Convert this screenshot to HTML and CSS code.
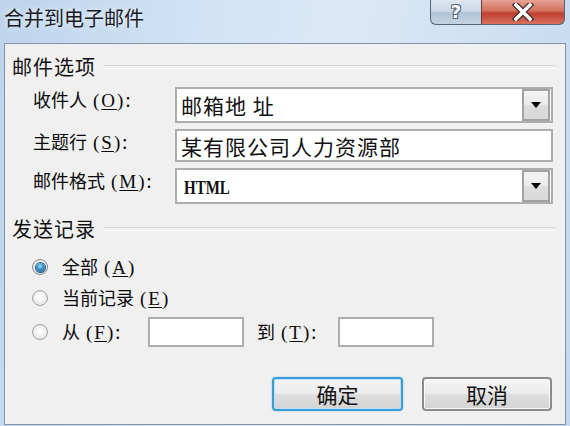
FILE: index.html
```html
<!DOCTYPE html>
<html lang="zh-CN">
<head>
<meta charset="utf-8">
<title>合并到电子邮件</title>
<link rel="stylesheet" href="styles.css">
</head>
<body>
<div class="window">
  <div class="titlebar">
    <div class="title">合并到电子邮件</div>
    <div class="caption-btns">
      <div class="cap-btn help"><span class="q">?</span></div>
      <div class="cap-btn close">
        <svg width="22" height="18" viewBox="0 0 22 18">
          <path d="M4 2 L18 16 M18 2 L4 16" stroke="#3a2a2a" stroke-width="6" stroke-linecap="square"/>
          <path d="M4 2 L18 16 M18 2 L4 16" stroke="#ffffff" stroke-width="3.6" stroke-linecap="square"/>
        </svg>
      </div>
    </div>
  </div>
  <div class="panel">
    <div class="group-head"><span class="legend">邮件选项</span></div>
    <div class="form">
      <div class="label">收件人<span class="acc">(<u>O</u>)</span>:</div>
      <div class="combo">
        <span class="value">邮箱地 址</span>
        <span class="drop"><svg width="10" height="6" viewBox="0 0 10 6"><path d="M0 0 H10 L5 6 Z" fill="#000"/></svg></span>
      </div>
      <div class="label">主题行<span class="acc">(<u>S</u>)</span>:</div>
      <div class="textbox"><span class="value">某有限公司人力资源部</span></div>
      <div class="label">邮件格式<span class="acc">(<u>M</u>)</span>:</div>
      <div class="combo">
        <span class="value"><span class="mono">HTML</span></span>
        <span class="drop"><svg width="10" height="6" viewBox="0 0 10 6"><path d="M0 0 H10 L5 6 Z" fill="#000"/></svg></span>
      </div>
    </div>
    <div class="group-head second"><span class="legend">发送记录</span></div>
    <div class="radios">
      <div class="radio-row">
        <span class="radio checked"><span class="dot"></span></span>
        <span class="rlabel">全部<span class="acc">(<u>A</u>)</span></span>
      </div>
      <div class="radio-row">
        <span class="radio"></span>
        <span class="rlabel">当前记录<span class="acc">(<u>E</u>)</span></span>
      </div>
      <div class="radio-row range">
        <span class="radio"></span>
        <span class="rlabel from">从<span class="acc">(<u>F</u>)</span>:</span>
        <span class="small-box"></span>
        <span class="rlabel to">到<span class="acc">(<u>T</u>)</span>:</span>
        <span class="small-box"></span>
      </div>
    </div>
    <div class="buttons">
      <div class="btn default">确定</div>
      <div class="btn">取消</div>
    </div>
  </div>
</div>
</body>
</html>
```
FILE: styles.css
```css
* { box-sizing: border-box; }

html, body {
  margin: 0;
  padding: 0;
}

body {
  width: 570px;
  height: 426px;
  overflow: hidden;
  background: linear-gradient(100deg, #bdd4ec 0%, #d3e4f6 35%, #dbe8f6 55%, #c3d8ee 100%);
  font-family: "Noto Sans CJK SC", "Noto Sans", sans-serif;
  color: #000;
}

.window {
  display: flex;
  flex-direction: column;
  height: 426px;
}

.titlebar {
  height: 43px;
  display: flex;
  align-items: flex-start;
  flex: none;
}

.title {
  font-size: 20px;
  line-height: 24px;
  padding: 6px 0 0 4px;
  color: #1b1b22;
  text-shadow: 0 0 6px rgba(255,255,255,0.9);
}

.caption-btns {
  margin-left: auto;
  margin-right: 5px;
  display: flex;
  height: 25px;
}

.cap-btn {
  height: 25px;
  display: flex;
  align-items: center;
  justify-content: center;
  border: 1px solid #55667a;
  border-top: none;
}

.help {
  width: 51px;
  border-radius: 0 0 0 6px;
  border-right: none;
  background: linear-gradient(#dfe7f0 0%, #c9d6e4 50%, #b1c3d6 52%, #c3d3e3 100%);
}

.q {
  font-family: "DejaVu Sans", sans-serif;
  font-weight: bold;
  font-size: 18px;
  line-height: 20px;
  color: #ffffff;
  text-shadow: 1px 1px 0 #556677, -1px -1px 0 #556677, 1px -1px 0 #556677, -1px 1px 0 #556677;
}

.close {
  width: 84px;
  border-radius: 0 0 6px 0;
  border-left: 1px solid #6a3a38;
  background: linear-gradient(#e5a293 0%, #d2705f 45%, #c0402f 55%, #d8705e 100%);
}

.panel {
  height: 382px;
  margin: 0 4px 0 4px;
  border: 1px solid #8394a8;
  background: #f0f0f0;
  display: flex;
  flex-direction: column;
}

.group-head {
  display: flex;
  align-items: center;
  height: 24px;
  margin-top: 11px;
  padding-left: 7px;
  padding-right: 9px;
}

.group-head.second {
  margin-top: 13px;
}

.legend {
  font-size: 20px;
  line-height: 24px;
  letter-spacing: 1px;
  color: #101010;
}

.group-head::after {
  content: "";
  flex: 1;
  height: 2px;
  margin-left: 8px;
  border-top: 1px solid #d6d8da;
  border-bottom: 1px solid #fbfbfb;
}

.form {
  margin-top: 8px;
  padding-left: 28px;
  display: grid;
  grid-template-columns: 142px 378px;
  row-gap: 6px;
}

.label {
  font-size: 18px;
  line-height: 20px;
  padding-top: 2px;
  color: #0a0a0a;
  white-space: nowrap;
}

.acc {
  font-family: "Liberation Serif", "DejaVu Serif", serif;
  font-size: 19px;
  letter-spacing: 2px;
  margin-left: 6px;
}

.acc u {
  text-underline-offset: 2px;
}

.combo, .textbox {
  background: #fff;
  border: 2px solid #adadad;
  display: flex;
  align-items: center;
  padding-left: 4px;
}

.combo {
  height: 36px;
  padding-right: 1px;
}

.textbox {
  height: 33px;
}

.value {
  font-size: 21px;
  line-height: 26px;
  letter-spacing: 1px;
  color: #111;
  flex: 1;
}

.mono {
  display: inline-block;
  font-family: "Liberation Serif", "DejaVu Serif", serif;
  font-weight: bold;
  font-size: 15px;
  letter-spacing: 0;
  margin-left: 3px;
  transform: scaleY(1.2);
}

.drop {
  width: 28px;
  height: 32px;
  align-self: flex-start;
  border: 2px solid #a2a2a2;
  background: linear-gradient(#f3f3f3 0%, #ebebeb 50%, #dedede 51%, #d8d8d8 100%);
  display: flex;
  align-items: center;
  justify-content: center;
}

.radios {
  margin-top: 14px;
  padding-left: 27px;
  display: flex;
  flex-direction: column;
  gap: 7px;
}

.radio-row {
  display: flex;
  align-items: center;
  height: 24px;
}

.radio-row.range {
  height: 30px;
}

.radio {
  width: 16px;
  height: 16px;
  border-radius: 50%;
  border: 1px solid #a3a3a3;
  background: radial-gradient(circle at 50% 40%, #ffffff 0%, #f2f2f2 45%, #d9d9d9 100%);
  box-shadow: inset 0 0 0 1px #e8e8e8;
  display: flex;
  align-items: center;
  justify-content: center;
  flex: none;
}

.radio.checked {
  border-color: #8a8a8a;
}

.dot {
  width: 9px;
  height: 9px;
  border-radius: 50%;
  background: radial-gradient(circle at 45% 35%, #9fd6f5 0%, #3a91c8 45%, #145a8c 100%);
  box-shadow: 0 0 0 1px #2e5f88;
}

.rlabel {
  margin-left: 14px;
  font-size: 18px;
  line-height: 22px;
  color: #0a0a0a;
  white-space: nowrap;
}

.rlabel.from {
  width: 86px;
}

.rlabel.to {
  margin-left: 13px;
  width: 81px;
}

.small-box {
  width: 96px;
  height: 30px;
  background: #fff;
  border: 2px solid #adadad;
}

.buttons {
  margin-top: 30px;
  display: flex;
  justify-content: flex-end;
  gap: 19px;
  padding-right: 13px;
}

.btn {
  width: 130px;
  height: 34px;
  border: 2px solid #8a8a8a;
  border-radius: 4px;
  background: linear-gradient(#f4f4f4 0%, #ececec 48%, #dedede 52%, #d3d3d3 100%);
  box-shadow: inset 0 0 0 1px #fbfbfb;
  display: flex;
  align-items: center;
  justify-content: center;
  font-size: 21px;
  line-height: 26px;
  color: #111;
}

.btn.default {
  width: 131px;
  border-color: #3e9ad3;
  box-shadow: inset 0 0 0 1px #b7e3f8, 0 0 2px #7cc4ec;
}
```
